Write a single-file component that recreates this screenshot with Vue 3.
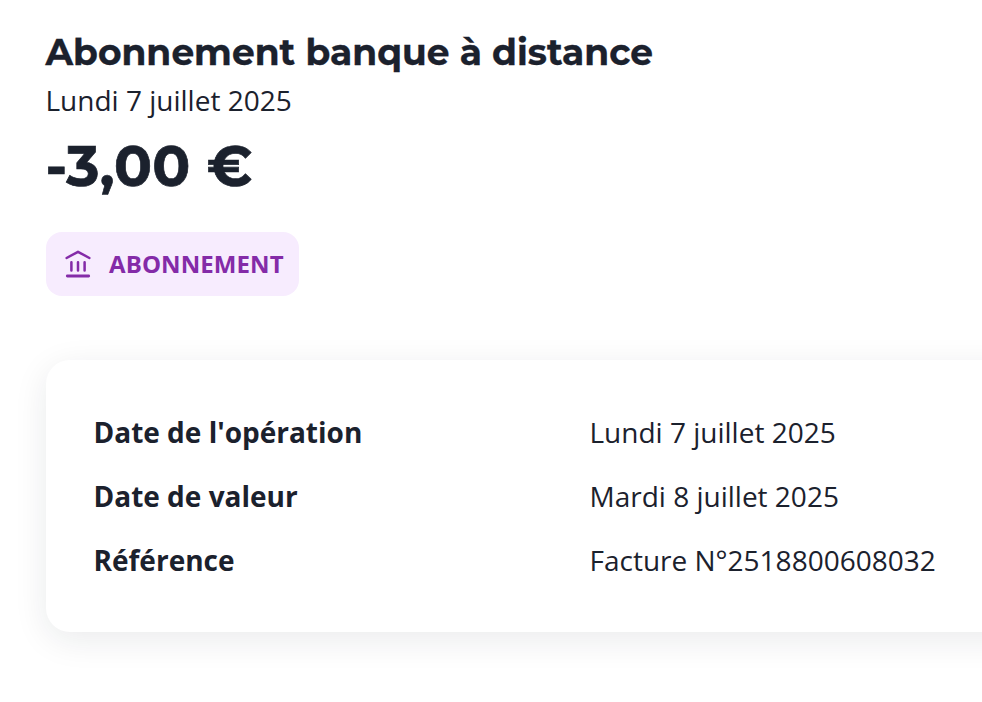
<script setup>
const details = [
  { label: "Date de l'opération", value: 'Lundi 7 juillet 2025' },
  { label: 'Date de valeur', value: 'Mardi 8 juillet 2025' },
  { label: 'Référence', value: 'Facture N°2518800608032' },
]
</script>

<template>
  <main class="page">
    <h1 class="title">Abonnement banque à distance</h1>
    <p class="date">Lundi 7 juillet 2025</p>
    <p class="amount">-3,00 €</p>
    <div class="tag">
      <svg class="icon" viewBox="0 0 32 32" fill="none" stroke="currentColor" stroke-width="2.500" stroke-linecap="round" stroke-linejoin="round">
        <path d="M4.600 10 16 3.800 27.400 10M9.400 14.200v8.200M16 14.200v8.200M22.600 14.200v8.200" />
        <path stroke-width="2.800" d="M5.300 28h21.400" />
      </svg>
      <span class="tag-label">ABONNEMENT</span>
    </div>
    <section class="card">
      <dl v-for="d in details" :key="d.label" class="row">
        <dt>{{ d.label }}</dt>
        <dd>{{ d.value }}</dd>
      </dl>
    </section>
  </main>
</template>

<style>
body { background: #fff; overflow: hidden; }
</style>

<style scoped>
.page {
  box-sizing: border-box;
  width: 982px;
  height: 702px;
  padding: 29px 0 0 46px;
  overflow: hidden;
  color: #1b212d;
  font-family: "Open Sans", "Noto Sans", sans-serif;
  font-size: 28px;
}
.title, .date, .amount { margin-left: -0.5px; }
.title, .amount {
  margin-top: 0;
  margin-bottom: 0;
  font-family: Montserrat, Inter, sans-serif;
  font-weight: 700;
  white-space: nowrap;
}
.title {
  font-size: 36px;
  line-height: 46px;
  -webkit-text-stroke: 0.3px currentColor;
}
.date { margin-top: 5px; margin-bottom: 0; line-height: 40px; }
.amount {
  margin-top: 14px;
  font-size: 56px;
  line-height: 64px;
  letter-spacing: 0.3px;
  -webkit-text-stroke: 0.7px currentColor;
}
.tag {
  box-sizing: border-box;
  display: flex;
  align-items: center;
  gap: 15px;
  width: 253px;
  height: 64px;
  margin-top: 34px;
  padding-left: 16px;
  border-radius: 16px;
  background: #f7ecfe;
  color: #842ba8;
  font-size: 24px;
  font-weight: 700;
}
.tag-label { padding-bottom: 2px; letter-spacing: 0.1px; }
.icon { width: 32px; height: 32px; }
.card {
  box-sizing: border-box;
  width: 1100px;
  height: 272px;
  margin-top: 64px;
  padding: 52px 47.5px;
  border-radius: 24px;
  box-shadow: 0 8px 34px rgba(27, 33, 45, 0.09);
}
.row {
  display: grid;
  grid-template-columns: 496px 1fr;
  margin: 0 0 24px;
  line-height: 40px;
}
dt { font-weight: 700; }
dd { margin: 0; }
</style>
